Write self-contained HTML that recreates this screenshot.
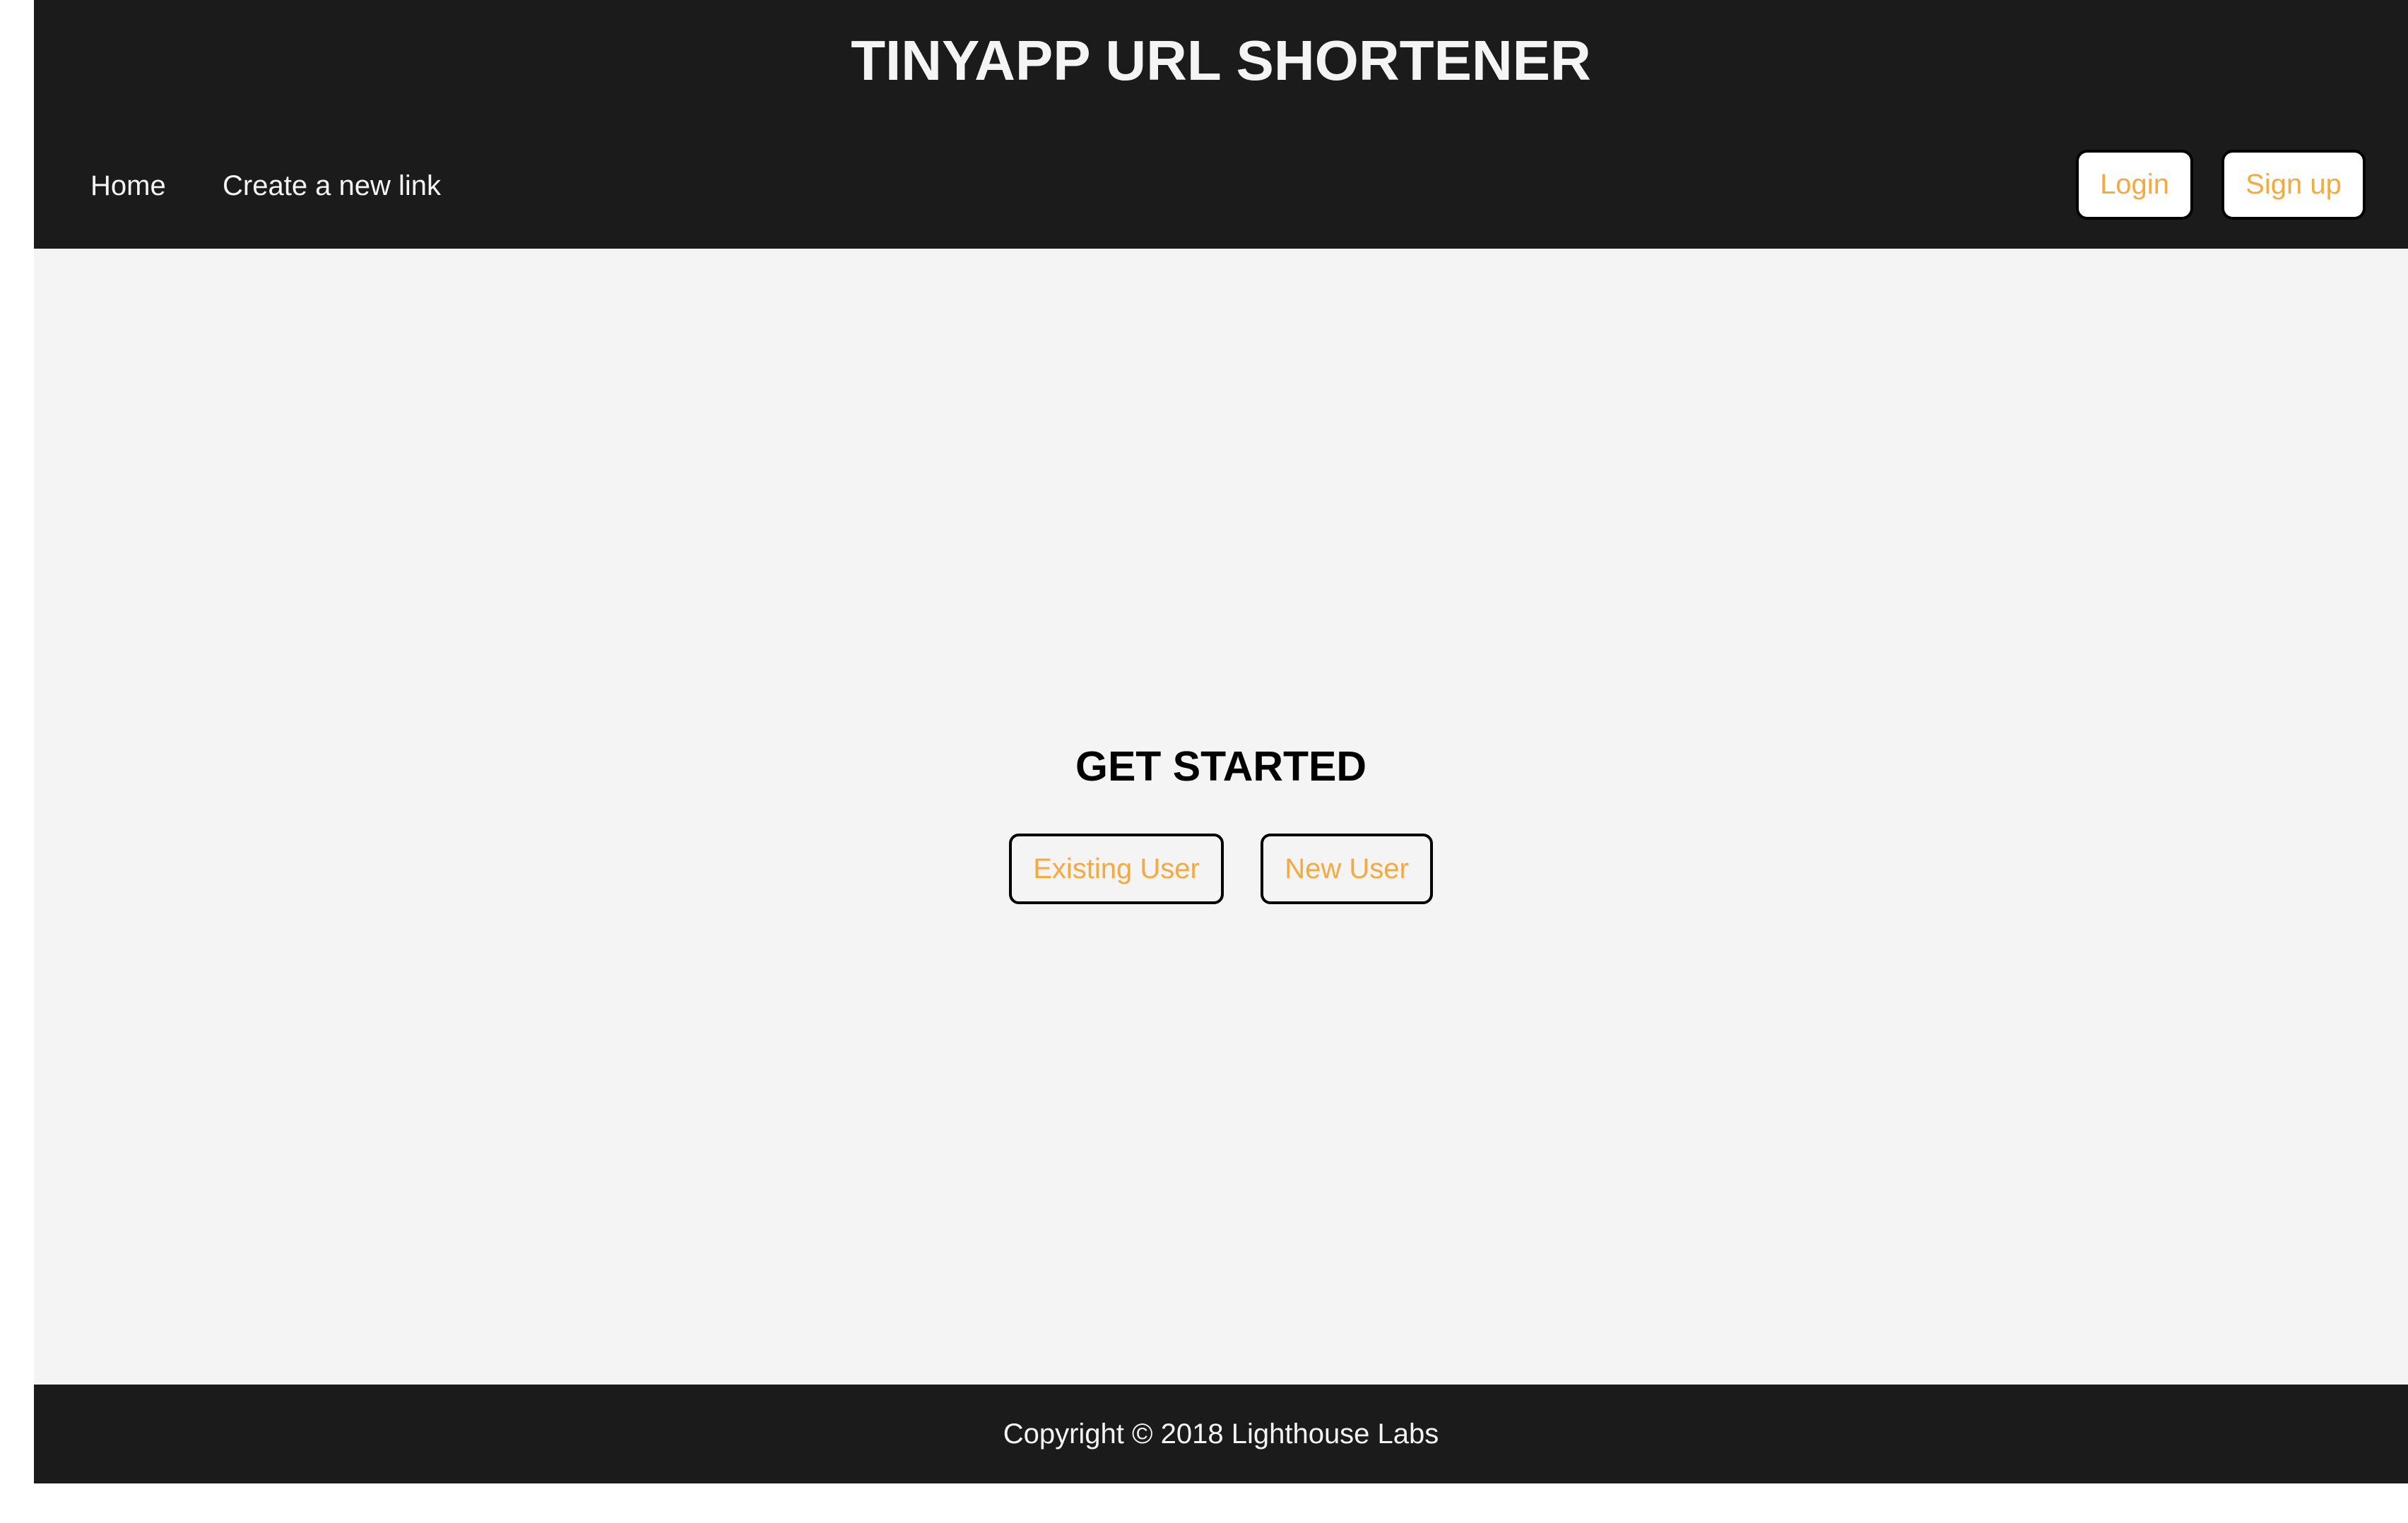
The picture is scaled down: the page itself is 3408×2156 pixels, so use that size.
<!DOCTYPE html>
<html><head><style>
*{margin:0;padding:0;box-sizing:border-box}
body{width:3408px;height:2156px;background:#fff;font-family:"Liberation Sans",Arial,sans-serif;position:relative;overflow:hidden}
.hdr{position:absolute;left:48px;top:0;width:3360px;height:352px;background:#1b1b1b}
.title{position:absolute;left:48px;width:3360px;top:36px;text-align:center;color:#f4f4f4;font-weight:bold;font-size:80px;line-height:100px}
.nav{position:absolute;top:238px;color:#f4f4f4;font-size:40px;line-height:50px}
.btn{position:absolute;background:#fff;border:4px solid #000;border-radius:16px;color:#f5a93f;font-size:40px;display:flex;align-items:center;justify-content:center}
.main{position:absolute;left:48px;top:352px;width:3360px;height:1608px;background:#f4f4f4}
.gs{position:absolute;left:48px;width:3360px;top:1050px;text-align:center;font-weight:bold;font-size:59px;line-height:70px;color:#000}
.b2{background:transparent;border:4px solid #000;border-radius:14px}
.ftr{position:absolute;left:48px;top:1960px;width:3360px;height:140px;background:#1b1b1b;color:#f4f4f4;font-size:40px;display:flex;align-items:center;justify-content:center}
</style></head><body>
<div class="hdr"></div>
<div class="title">TINYAPP URL SHORTENER</div>
<div class="nav" style="left:128px">Home</div>
<div class="nav" style="left:315px">Create a new link</div>
<div class="btn" style="left:2938px;top:212px;width:166px;height:99px">Login</div>
<div class="btn" style="left:3144px;top:212px;width:204px;height:99px">Sign up</div>
<div class="main"></div>
<div class="gs">GET STARTED</div>
<div class="btn b2" style="left:1428px;top:1180px;width:304px;height:100px">Existing User</div>
<div class="btn b2" style="left:1784px;top:1180px;width:244px;height:100px">New User</div>
<div class="ftr">Copyright © 2018 Lighthouse Labs</div>
</body></html>
